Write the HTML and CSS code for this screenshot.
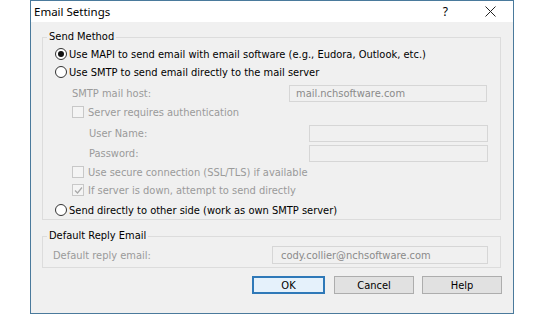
FILE: index.html
```html
<!DOCTYPE html>
<html lang="en">
<head>
  <meta charset="UTF-8" />
  <title>Email Settings</title>
  <link rel="stylesheet" href="styles.css">
</head>
<body>
  <div class="dialog">
    <div class="titlebar">
      <span class="title">Email Settings</span>
      <span class="help-q">?</span>
      <svg class="close" width="11" height="11" viewBox="0 0 11 11">
        <path d="M0.5 0.5 L10.5 10.5 M10.5 0.5 L0.5 10.5" stroke="#222" stroke-width="1" fill="none"/>
      </svg>
    </div>

    <div class="content">
      <fieldset class="group send">
        <legend>Send Method</legend>

        <div class="row radio-row first">
          <span class="radio checked"></span>
          <span>Use MAPI to send email with email software (e.g., Eudora, Outlook, etc.)</span>
        </div>
        <div class="row radio-row">
          <span class="radio"></span>
          <span>Use SMTP to send email directly to the mail server</span>
        </div>

        <div class="row field-row host">
          <span class="lbl">SMTP mail host:</span>
          <span class="input host-input">mail.nchsoftware.com</span>
        </div>
        <div class="row check-row">
          <span class="check"></span>
          <span class="dim">Server requires authentication</span>
        </div>
        <div class="row field-row sub">
          <span class="lbl">User Name:</span>
          <span class="input sub-input"></span>
        </div>
        <div class="row field-row sub">
          <span class="lbl">Password:</span>
          <span class="input sub-input"></span>
        </div>
        <div class="row check-row">
          <span class="check"></span>
          <span class="dim">Use secure connection (SSL/TLS) if available</span>
        </div>
        <div class="row check-row">
          <span class="check">
            <svg width="9" height="9" viewBox="0 0 9 9"><path d="M1 4.5 L3.5 7 L8 1.5" stroke="#a8a8a8" stroke-width="1.2" fill="none"/></svg>
          </span>
          <span class="dim">If server is down, attempt to send directly</span>
        </div>
        <div class="row radio-row last">
          <span class="radio"></span>
          <span>Send directly to other side (work as own SMTP server)</span>
        </div>
      </fieldset>

      <fieldset class="group reply">
        <legend>Default Reply Email</legend>
        <div class="row field-row reply-row">
          <span class="lbl">Default reply email:</span>
          <span class="input reply-input">cody.collier@nchsoftware.com</span>
        </div>
      </fieldset>

      <div class="buttons">
        <button class="btn default">OK</button>
        <button class="btn">Cancel</button>
        <button class="btn">Help</button>
      </div>
    </div>
  </div>
</body>
</html>
```

FILE: styles.css
```css
body {
  margin: 0;
  background: #fff;
  font-family: "DejaVu Sans Condensed", "DejaVu Sans", sans-serif;
  font-size: 11px;
  color: #000;
}
.dialog {
  margin-left: 30px;
  width: 482px;
  height: 312px;
  border: 1px solid #4a7a9c;
  background: #f0f0f0;
  display: flex;
  flex-direction: column;
}
.titlebar {
  height: 21px;
  background: #fff;
  display: flex;
  align-items: center;
  flex-shrink: 0;
}
.title {
  font-family: "Noto Sans", sans-serif;
  font-size: 11.5px;
  margin-left: 3px;
  flex: 1;
}
.help-q {
  font-family: "Noto Sans", sans-serif;
  font-size: 12px;
  margin-right: 37px;
}
.close {
  margin-right: 17px;
}
.content {
  flex: 1;
  display: flex;
  flex-direction: column;
}
.group {
  margin: 0 12px 0 11px;
  padding: 0;
  border: 1px solid #dcdcdc;
  min-width: 0;
}
.group legend {
  margin-left: 4px;
  padding: 0 2px;
  line-height: 14px;
  height: 14px;
}
.send {
  margin-top: 8px;
  height: 188px;
}
.reply {
  margin-top: 9px;
  height: 37px;
}
.row {
  display: flex;
  align-items: center;
}
.radio-row {
  height: 18px;
  padding-left: 12px;
}
.radio-row.first {
  margin-top: 1px;
}
.radio-row.last {
  margin-top: 2px;
}
.radio {
  width: 10px;
  height: 10px;
  border: 1px solid #333;
  border-radius: 50%;
  background: #fff;
  margin-right: 2px;
  display: flex;
  align-items: center;
  justify-content: center;
}
.radio.checked::after {
  content: "";
  width: 6px;
  height: 6px;
  border-radius: 50%;
  background: #111;
}
.lbl {
  color: #9a9a9a;
}
.dim {
  color: #9a9a9a;
}
.field-row {
  height: 20px;
}
.host {
  margin-top: 2px;
  padding-left: 29px;
}
.host .lbl {
  width: 217px;
}
.sub {
  padding-left: 46px;
}
.sub .lbl {
  width: 220px;
}
.input {
  height: 15px;
  border: 1px solid #d6d6d6;
  background: #f0f0f0;
  color: #8a8a8a;
  display: flex;
  align-items: center;
  padding-left: 6px;
  box-sizing: content-box;
}
.host-input {
  width: 190px;
}
.sub-input {
  width: 171px;
}
.check-row {
  height: 18px;
  padding-left: 29px;
}
.check-row + .field-row {
  margin-top: 2px;
}
.check {
  width: 10px;
  height: 10px;
  border: 1px solid #c8c8c8;
  background: #f4f4f4;
  margin-right: 4px;
  display: flex;
  align-items: center;
  justify-content: center;
}
.reply-row {
  height: 20px;
  margin-top: 2px;
  padding-left: 10px;
}
.reply-row .lbl {
  width: 219px;
}
.reply-input {
  width: 206px;
  height: 16px;
  padding-left: 8px;
}
.buttons {
  display: flex;
  justify-content: flex-end;
  gap: 8px;
  margin: 8px 11px 0 0;
}
.btn {
  width: 80px;
  height: 18px;
  padding: 0;
  border: 1px solid #adadad;
  background: #e1e1e1;
  font-family: "DejaVu Sans Condensed", "DejaVu Sans", sans-serif;
  font-size: 11px;
  color: #000;
}
.btn.default {
  width: 73px;
  margin-right: 1px;
  border-color: #2f79b8;
  background: #e5f1fb;
  box-shadow: inset 0 0 0 1px #2f79b8;
}
```
